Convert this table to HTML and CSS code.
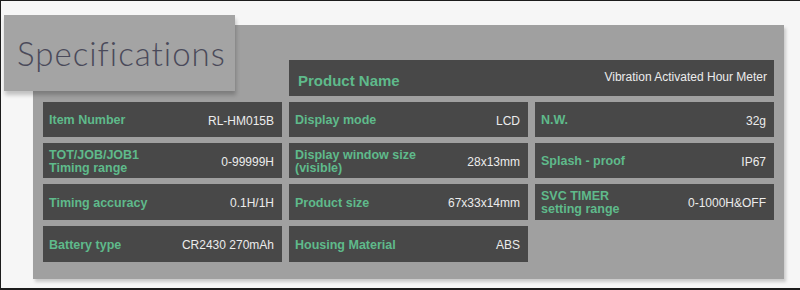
FILE: index.html
```html
<!DOCTYPE html>
<html>
<head>
<meta charset="utf-8">
<link rel="stylesheet" href="styles.css">
</head>
<body>
<div class="frame">
  <div class="panel">
    <div class="grid">
      <div class="cell product"><span class="label">Product Name</span><span class="value">Vibration Activated Hour Meter</span></div>

      <div class="cell"><span class="label">Item Number</span><span class="value">RL-HM015B</span></div>
      <div class="cell"><span class="label">Display mode</span><span class="value">LCD</span></div>
      <div class="cell"><span class="label">N.W.</span><span class="value">32g</span></div>

      <div class="cell"><span class="label">TOT/JOB/JOB1<br>Timing range</span><span class="value">0-99999H</span></div>
      <div class="cell"><span class="label">Display window size<br>(visible)</span><span class="value">28x13mm</span></div>
      <div class="cell"><span class="label">Splash - proof</span><span class="value">IP67</span></div>

      <div class="cell"><span class="label">Timing accuracy</span><span class="value">0.1H/1H</span></div>
      <div class="cell"><span class="label">Product size</span><span class="value">67x33x14mm</span></div>
      <div class="cell"><span class="label">SVC TIMER<br>setting range</span><span class="value">0-1000H&amp;OFF</span></div>

      <div class="cell"><span class="label">Battery type</span><span class="value">CR2430 270mAh</span></div>
      <div class="cell"><span class="label">Housing Material</span><span class="value">ABS</span></div>
    </div>
  </div>
  <div class="tab"><h1 class="title">Specifications</h1></div>
</div>
</body>
</html>
```
FILE: styles.css
```css
* { box-sizing: border-box; }
html, body { margin: 0; padding: 0; background: #f6f6f6; }
.frame {
  position: relative;
  width: 800px;
  height: 290px;
  border-left: 1px solid #1c1c1c;
  border-top: 1px solid #1c1c1c;
  border-bottom: 2px solid #1c1c1c;
  background: #f6f6f6;
  padding: 24px 0 0 32px;
}
.panel {
  width: 751px;
  height: 254px;
  background: #a0a0a0;
  padding: 35px 0 0 10px;
  box-shadow: 2px 3px 3px rgba(0,0,0,0.18);
}
.grid {
  display: grid;
  grid-template-columns: 239px 239px 239px;
  grid-template-rows: 36px 35px 35px 36px 36px;
  column-gap: 7px;
  row-gap: 6px;
}
.cell {
  background: #484848;
  display: flex;
  align-items: center;
  justify-content: space-between;
  padding: 2px 8px 0 6px;
  font-family: "Liberation Sans", Arial, sans-serif;
}
.product {
  grid-column: 2 / 4;
  padding: 4px 7px 0 9px;
  align-items: center;
}
.label {
  color: #5fba8b;
  font-weight: bold;
  font-size: 12.5px;
  line-height: 13px;
}
.product .label { font-size: 15px; line-height: 17px; }
.product .value { margin-top: -6px; }
.value {
  color: #ececec;
  font-size: 12px;
  white-space: nowrap;
}
.tab {
  position: absolute;
  left: 3px;
  top: 14px;
  width: 231px;
  height: 76px;
  background: #a4a4a4;
  box-shadow: 1px 4px 4px rgba(0,0,0,0.22);
  padding: 19px 0 0 13px;
}
.title {
  margin: 0;
  font-family: Lato, "Open Sans", sans-serif;
  font-weight: 300;
  font-size: 33px;
  line-height: 38px;
  letter-spacing: 1px;
  color: #4a4a5a;
}
```
